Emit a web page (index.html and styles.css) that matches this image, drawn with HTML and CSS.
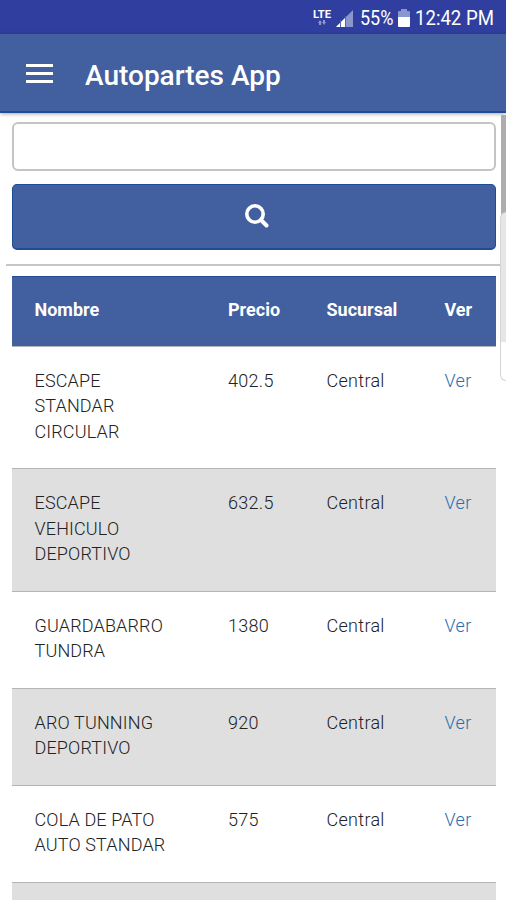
FILE: index.html
```html
<!DOCTYPE html>
<html lang="es">
<head>
    <meta charset="UTF-8">
    <meta name="viewport" content="width=device-width, initial-scale=1.0">
    <title>Autopartes App</title>
    <link rel="stylesheet" href="styles.css">
</head>
<body>
    <div class="status-bar">
        <svg class="lte" width="19" height="18" viewBox="0 0 19 18">
            <text class="lte-text" x="0" y="9" textLength="18" lengthAdjust="spacingAndGlyphs">LTE</text>
            <path d="M7 11l2 3H8v2H6v-2H5zM11 16l2-3h-1v-2h-2v2H9z" fill="#8d96cf"/>
        </svg>
        <svg class="signal" width="17" height="17" viewBox="0 0 17 17">
            <path d="M0 17L17 0v17z" fill="#8b96cd"/>
            <path d="M0 17L9 8v9z" fill="#fff"/>
            <path d="M4.5 10v7M9.5 6v11" stroke="#5965b3" stroke-width="1"/>
        </svg>
        <span class="battery-level">55%</span>
        <svg class="battery" width="12" height="18" viewBox="0 0 12 18">
            <path d="M3 0h6v2h2q1 0 1 1v6H0V3q0-1 1-1h2z" fill="#8b96cd"/>
            <path d="M0 8h12v9q0 1-1 1H1q-1 0-1-1z" fill="#fff"/>
        </svg>
        <span class="clock">12:42 PM</span>
    </div>
    <header>
        <button class="menu-button" aria-label="Menú">
            <span></span>
            <span></span>
            <span></span>
        </button>
        <h1>Autopartes App</h1>
    </header>
    <main>
        <form class="search-form">
            <input type="text" class="search-input" aria-label="Buscar">
            <button type="button" class="search-button" aria-label="Buscar">
                <svg width="24" height="24" viewBox="0 0 24 24" fill="none" stroke="#fff">
                    <circle cx="10" cy="10" r="8.2" stroke-width="3.6"/>
                    <path d="M16 16l5.5 5.5" stroke-width="4" stroke-linecap="round"/>
                </svg>
            </button>
        </form>
        <hr>
        <table>
            <thead>
                <tr>
                    <th class="col-nombre">Nombre</th>
                    <th class="col-precio">Precio</th>
                    <th class="col-sucursal">Sucursal</th>
                    <th>Ver</th>
                </tr>
            </thead>
            <tbody>
                <tr>
                    <td class="nombre">ESCAPE STANDAR CIRCULAR</td>
                    <td>402.5</td>
                    <td>Central</td>
                    <td><a href="#">Ver</a></td>
                </tr>
                <tr>
                    <td class="nombre">ESCAPE VEHICULO DEPORTIVO</td>
                    <td>632.5</td>
                    <td>Central</td>
                    <td><a href="#">Ver</a></td>
                </tr>
                <tr>
                    <td class="nombre">GUARDABARRO TUNDRA</td>
                    <td>1380</td>
                    <td>Central</td>
                    <td><a href="#">Ver</a></td>
                </tr>
                <tr>
                    <td class="nombre">ARO TUNNING DEPORTIVO</td>
                    <td>920</td>
                    <td>Central</td>
                    <td><a href="#">Ver</a></td>
                </tr>
                <tr>
                    <td class="nombre">COLA DE PATO AUTO STANDAR</td>
                    <td>575</td>
                    <td>Central</td>
                    <td><a href="#">Ver</a></td>
                </tr>
                <tr class="next-row">
                    <td colspan="4"></td>
                </tr>
            </tbody>
        </table>
        <div class="scrollbar"></div>
        <div class="edge-handle"></div>
    </main>
</body>
</html>
```
FILE: styles.css
```css
* {
    box-sizing: border-box;
}
body {
    font-family: Roboto, sans-serif;
    margin: 0;
    height: 900px;
    overflow: hidden;
    background-color: #fff;
    color: #222;
}
.status-bar {
    display: flex;
    align-items: center;
    justify-content: flex-end;
    height: 34px;
    padding: 2px 12px 0 0;
    background-color: #303f9f;
    color: #fff;
    font-size: 20px;
}
.lte-text {
    font-size: 11px;
    font-weight: 700;
    fill: #fff;
}
.signal {
    margin-left: 4px;
}
.battery-level {
    width: 34px;
    margin-left: 7px;
    transform: scaleX(0.9);
    transform-origin: left;
}
.battery {
    margin-left: 4px;
}
.clock {
    width: 79px;
    margin-left: 5px;
    white-space: nowrap;
    transform: scaleX(0.93);
    transform-origin: left;
}
header {
    position: relative;
    display: flex;
    align-items: center;
    height: 79px;
    padding: 2px 26px 0;
    background-color: #4260a0;
    border-bottom: 2px solid #1f4c94;
    box-shadow: 0 1px 4px rgba(0, 0, 0, 0.35);
    color: #fff;
}
.menu-button {
    display: flex;
    flex-direction: column;
    gap: 5px;
    width: 27px;
    padding: 0;
    border: none;
    background: none;
}
.menu-button span {
    height: 3px;
    background-color: #fff;
}
h1 {
    margin: 3px 0 0 32px;
    font-size: 28px;
    font-weight: 500;
}
main {
    position: relative;
    height: 787px;
    padding: 9px 6px 0;
    overflow: hidden;
}
.search-form {
    display: flex;
    flex-direction: column;
    gap: 13px;
    padding: 0 4px 0 5.5px;
}
.search-input {
    height: 49px;
    border: 2px solid #c4c4c4;
    border-radius: 6px;
    background-color: #fff;
}
.search-button {
    display: flex;
    justify-content: center;
    height: 66px;
    padding: 19px 0 0 6px;
    border: 1px solid #1f4c94;
    border-bottom-width: 2px;
    border-radius: 5px;
    background-color: #4260a0;
}
hr {
    height: 2px;
    margin: 14px 0 10px;
    border: none;
    background-color: #c6c6c6;
}
table {
    width: 483.5px;
    margin-left: 6px;
    border-collapse: collapse;
    table-layout: fixed;
    font-size: 18px;
    line-height: 25.3px;
}
th, td {
    padding: 21px 22.5px 24.4px;
    text-align: left;
    vertical-align: top;
    border-bottom: 1px solid #b4b4b4;
}
th {
    padding: 20px 22.5px 23.7px;
    background-color: #4260a0;
    border-top: 1px solid #1f4c94;
    color: #fff;
    font-weight: 700;
}
td {
    font-weight: 300;
    letter-spacing: 0.3px;
}
.nombre {
    letter-spacing: 0.15px;
}
.col-nombre {
    width: 193.5px;
}
.col-precio {
    width: 98.5px;
}
.col-sucursal {
    width: 118px;
}
tbody tr:nth-child(even) {
    background-color: #dfdfdf;
}
.next-row td {
    height: 122px;
}
a {
    color: #2a6db0;
    text-decoration: none;
}
.scrollbar {
    position: absolute;
    top: 2px;
    right: 0;
    width: 5px;
    height: 101px;
    background-color: #adadad;
}
.edge-handle {
    position: absolute;
    top: 99px;
    right: 0;
    width: 6px;
    height: 169px;
    border: 1px solid #d5d5d5;
    border-right: none;
    border-radius: 6px 0 0 6px;
    background: linear-gradient(#e6e6e6 129px, #fff 129px);
}
```
